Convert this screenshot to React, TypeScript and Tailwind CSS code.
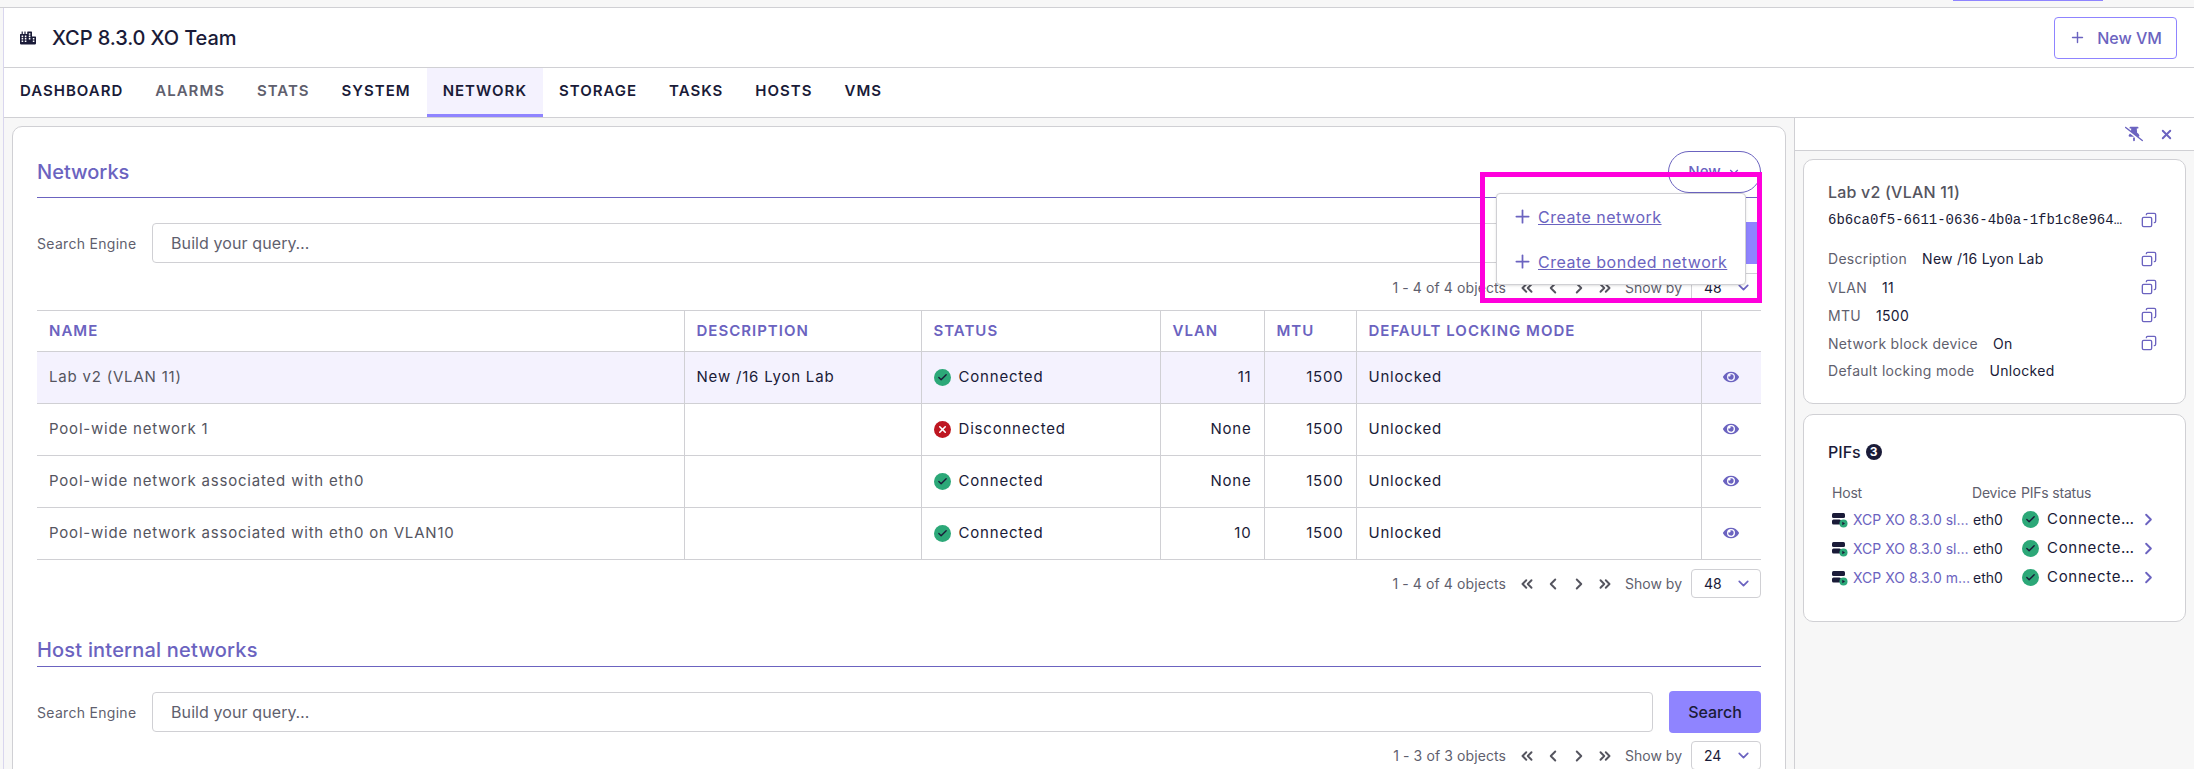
import { Check, ChevronDown, ChevronLeft, ChevronRight, ChevronsLeft, ChevronsRight, Copy, Plus, X } from "lucide-react";
import { FaCity, FaEye } from "react-icons/fa";
import { FaThumbtackSlash } from "react-icons/fa6";

const tabs = [
  { label: "Dashboard" },
  { label: "Alarms", muted: true },
  { label: "Stats", muted: true },
  { label: "System" },
  { label: "Network", active: true },
  { label: "Storage" },
  { label: "Tasks" },
  { label: "Hosts" },
  { label: "VMs" },
];

const networks = [
  { name: "Lab v2 (VLAN 11)", description: "New /16 Lyon Lab", connected: true, vlan: "11", selected: true },
  { name: "Pool-wide network 1", description: "", connected: false, vlan: "None" },
  { name: "Pool-wide network associated with eth0", description: "", connected: true, vlan: "None" },
  { name: "Pool-wide network associated with eth0 on VLAN10", description: "", connected: true, vlan: "10" },
];

const details = [
  { label: "Description", value: "New /16 Lyon Lab", copy: true, row: "h-[29px]" },
  { label: "VLAN", value: "11", copy: true, row: "h-[28px]" },
  { label: "MTU", value: "1500", copy: true, row: "h-[28px]" },
  { label: "Network block device", value: "On", copy: true, row: "h-[28px]" },
  { label: "Default locking mode", value: "Unlocked", copy: false, row: "h-[26px]" },
];

const pifs = ["XCP XO 8.3.0 sl…", "XCP XO 8.3.0 sl…", "XCP XO 8.3.0 m…"];

function StatusDot({ ok = true }: { ok?: boolean }) {
  return (
    <span className={`flex h-[17px] w-[17px] shrink-0 items-center justify-center rounded-full ${ok ? "bg-[#2ca878]" : "bg-[#be1621]"}`}>
      {ok ? (
        <Check className="h-[11px] w-[11px] text-[#1a1b38]" strokeWidth={3} />
      ) : (
        <X className="h-[11px] w-[11px] text-white" strokeWidth={3.5} />
      )}
    </span>
  );
}

function HostIcon() {
  return (
    <svg viewBox="0 0 16 16" className="mr-[5px] h-[16px] w-[16px] shrink-0">
      <rect x="0" y="1" width="13" height="5" rx="1.5" fill="#1a1b38" />
      <rect x="0" y="7.5" width="9" height="5" rx="1.5" fill="#1a1b38" />
      <circle cx="11.5" cy="11.5" r="4" fill="#2ca878" />
      <path d="M10.3 9.8 L13 11.5 L10.3 13.2 Z" fill="#1a1b38" />
    </svg>
  );
}

function Pagination({ range, show }: { range: string; show: string }) {
  return (
    <div className="flex items-center justify-end text-[14px] text-[#5f5f6e]">
      <span className="tracking-[0.1px]">{range}</span>
      <div className="ml-[12px] flex items-center gap-[8px] text-[#55555f]">
        <ChevronsLeft className="h-[18px] w-[18px]" strokeWidth={2.6} />
        <ChevronLeft className="h-[18px] w-[18px]" strokeWidth={2.6} />
        <ChevronRight className="h-[18px] w-[18px]" strokeWidth={2.6} />
        <ChevronsRight className="h-[18px] w-[18px]" strokeWidth={2.6} />
      </div>
      <span className="ml-[11px]">Show by</span>
      <div className="ml-[9px] flex h-[29px] w-[70px] items-center justify-between rounded-[4px] border border-[#d0d0d4] pr-[8px] pl-[12px] text-[#1a1b38]">
        {show}
        <ChevronDown className="h-[17px] w-[17px] text-[#6b63c0]" strokeWidth={2.4} />
      </div>
    </div>
  );
}

function SearchRow() {
  return (
    <div className="flex items-center">
      <span className="w-[115px] shrink-0 text-[14px] tracking-[0.3px] text-[#5f5f6e]">Search Engine</span>
      <div className="flex h-[40px] flex-1 items-center rounded-[4px] border border-[#d0d0d4] pl-[18px] text-[16px] tracking-[0.1px] text-[#5f5f6e]">
        Build your query…
      </div>
      <button className="ml-[16px] h-[42px] w-[92px] rounded-[4px] bg-[#8f84ff] text-[16px] font-medium text-[#1a1b38]">
        Search
      </button>
    </div>
  );
}

function NetworksTable() {
  return (
    <table className="w-full table-fixed border-collapse text-[15px] tracking-[0.8px] text-[#55555f]">
      <thead>
        <tr className="h-[41px] border-y border-[#d0d0d4] text-left text-[15px] font-semibold tracking-[1px] text-[#6b63c0]">
          <th className="w-[647px] px-3 font-semibold">NAME</th>
          <th className="w-[237px] border-l border-[#d0d0d4] px-3 font-semibold">DESCRIPTION</th>
          <th className="w-[239px] border-l border-[#d0d0d4] px-3 font-semibold">STATUS</th>
          <th className="w-[104px] border-l border-[#d0d0d4] px-3 font-semibold">VLAN</th>
          <th className="w-[92px] border-l border-[#d0d0d4] px-3 font-semibold">MTU</th>
          <th className="w-[345px] border-l border-[#d0d0d4] px-3 font-semibold">DEFAULT LOCKING MODE</th>
          <th className="border-l border-[#d0d0d4]"></th>
        </tr>
      </thead>
      <tbody>
        {networks.map((n) => (
          <tr key={n.name} className={`h-[52px] border-b border-[#d0d0d4] ${n.selected ? "bg-[#f4f2fe]" : ""}`}>
            <td className="px-3 whitespace-nowrap">{n.name}</td>
            <td className="border-l border-[#d0d0d4] px-3 text-[#1a1b38]">{n.description}</td>
            <td className="border-l border-[#d0d0d4] px-3 text-[#1a1b38]">
              <div className="flex items-center gap-[8px]">
                <StatusDot ok={n.connected} />
                {n.connected ? "Connected" : "Disconnected"}
              </div>
            </td>
            <td className="border-l border-[#d0d0d4] px-3 text-right text-[#1a1b38]">{n.vlan}</td>
            <td className="border-l border-[#d0d0d4] px-3 text-right text-[#1a1b38]">1500</td>
            <td className="border-l border-[#d0d0d4] px-3 text-[#1a1b38]">Unlocked</td>
            <td className="border-l border-[#d0d0d4] text-center">
              <FaEye className="mx-auto h-[16px] w-[16px] -translate-y-px text-[#6b63c0]" />
            </td>
          </tr>
        ))}
      </tbody>
    </table>
  );
}

function DetailCard() {
  return (
    <div className="rounded-[10px] border border-[#d0d0d4] bg-white pt-[22px] pr-[28px] pb-[20px] pl-[24px]">
      <h3 className="text-[16px] leading-[20px] font-medium tracking-[0.2px] text-[#55555f]">Lab v2 (VLAN 11)</h3>
      <div className="mt-[8px] flex h-[20px] items-center justify-between text-[14px] text-[#1a1b38]" style={{ fontFamily: '"Liberation Mono", monospace' }}>
        <span>6b6ca0f5-6611-0636-4b0a-1fb1c8e964…</span>
        <Copy className="h-[16px] w-[16px] -scale-x-100 text-[#6b63c0]" />
      </div>
      <div className="mt-[14px] text-[14px] tracking-[0.3px]">
        {details.map((d) => (
          <div key={d.label} className={`flex items-center ${d.row}`}>
            <span className="text-[#5f5f6e]">{d.label}</span>
            <span className="ml-[15px] text-[#1a1b38]">{d.value}</span>
            {d.copy && <Copy className="ml-auto h-[16px] w-[16px] -scale-x-100 text-[#6b63c0]" />}
          </div>
        ))}
      </div>
    </div>
  );
}

function PifsCard() {
  return (
    <div className="mt-[10px] rounded-[10px] border border-[#d0d0d4] bg-white pt-[27px] pr-[26px] pb-[29px] pl-[24px]">
      <div className="flex h-[20px] items-center gap-[5px] text-[16px] font-medium text-[#1a1b38]">
        PIFs
        <span className="flex h-4 w-4 items-center justify-center rounded-full bg-[#1a1b38] text-[12px] font-bold text-white">3</span>
      </div>
      <div className="mt-[18px] pl-[4px]">
        <div className="flex h-[25px] items-center text-[14px] tracking-[-0.2px] text-[#5f5f6e]">
          <span className="w-[140px]">Host</span>
          <span className="w-[49px]">Device</span>
          <span>PIFs status</span>
        </div>
        {pifs.map((host, i) => (
          <div key={i} className="flex h-[29px] items-center text-[14px]">
            <div className="flex w-[141px] shrink-0 items-center">
              <HostIcon />
              <span className="whitespace-nowrap text-[#6b63c0]">{host}</span>
            </div>
            <span className="w-[49px] shrink-0 text-[#1a1b38]">eth0</span>
            <StatusDot />
            <span className="ml-[8px] w-[92px] shrink-0 text-[15px] tracking-[0.7px] whitespace-nowrap text-[#1a1b38]">Connecte…</span>
            <ChevronRight className="h-[19px] w-[19px] shrink-0 text-[#6b63c0]" strokeWidth={2.4} />
          </div>
        ))}
      </div>
    </div>
  );
}

export default function App() {
  return (
    <div className="relative flex h-[769px] flex-col overflow-hidden bg-[#f7f7f7] text-[#1a1b38]" style={{ fontFamily: "Inter, sans-serif" }}>
      <div className="h-[8px] shrink-0 border-b border-[#d0d0d4] bg-[#f7f7f7]">
        <div className="ml-[1953px] h-px w-[150px] bg-[#8f84ff]" />
      </div>

      <div className="flex min-h-0 flex-1">
        <div className="w-[4px] shrink-0 border-r border-[#d9d6ee] bg-[#f7f7f7]" />

        <div className="flex min-w-0 flex-1 flex-col">
          <header className="flex h-[60px] shrink-0 items-center justify-between border-b border-[#d0d0d4] bg-white pr-[17px] pl-[16px]">
            <div className="flex items-center gap-[16px]">
              <FaCity className="h-[16px] w-[16px] text-[#1a1b38]" />
              <h1 className="text-[20px] font-medium tracking-[-0.1px]">XCP 8.3.0 XO Team</h1>
            </div>
            <button className="flex h-[42px] w-[123px] items-center justify-center gap-[11px] rounded-[4px] border border-[#8f84ff] text-[16px] font-medium text-[#6b63c0]">
              <Plus className="h-[17px] w-[17px]" />
              New VM
            </button>
          </header>

          <nav className="flex h-[50px] shrink-0 border-b border-[#d0d0d4] bg-white">
            {tabs.map((t) => (
              <div
                key={t.label}
                className={`flex items-center border-b-[3px] px-4 text-[15px] font-semibold tracking-[1px] uppercase ${
                  t.active ? "border-[#8f84ff] bg-[#f4f2fe]" : "border-transparent"
                } ${t.muted ? "text-[#5f5f6e]" : "text-[#1a1b38]"}`}
              >
                {t.label}
              </div>
            ))}
          </nav>

          <div className="flex min-h-0 flex-1">
            <main className="min-w-0 flex-1 pt-[8px] pr-[8px] pl-[8px]">
              <div className="relative h-[800px] rounded-t-[10px] border border-[#d0d0d4] bg-white px-[24px] pt-[24px]">
                <section>
                  <div className="flex h-[47px] items-end justify-between border-b border-[#6b63c0]">
                    <h2 className="mb-[10px] text-[20px] font-medium text-[#6b63c0]">Networks</h2>
                    <button className="mb-[4px] flex h-[42px] w-[93px] items-center justify-center gap-[6px] rounded-[21px] border border-[#6b63c0] bg-white text-[15px] font-medium text-[#6b63c0]">
                      New
                      <ChevronDown className="h-[14px] w-[14px]" />
                    </button>
                  </div>
                  <div className="mt-[24px]">
                    <SearchRow />
                  </div>
                  <div className="mt-[9px]">
                    <Pagination range="1 - 4 of 4 objects" show="48" />
                  </div>
                  <div className="mt-[8px]">
                    <NetworksTable />
                  </div>
                  <div className="mt-[9px]">
                    <Pagination range="1 - 4 of 4 objects" show="48" />
                  </div>
                </section>

                <section className="mt-[41px]">
                  <div className="flex h-[28px] items-start border-b border-[#6b63c0]">
                    <h2 className="text-[20px] leading-[22px] font-medium tracking-[0.2px] text-[#6b63c0]">Host internal networks</h2>
                  </div>
                  <div className="mt-[24px]">
                    <SearchRow />
                  </div>
                  <div className="mt-[8px]">
                    <Pagination range="1 - 3 of 3 objects" show="24" />
                  </div>
                </section>

                {/* open New menu */}
                <div className="absolute top-[66px] right-[39px] z-10 w-[250px] rounded-[4px] border border-[#d0d0d4] bg-white pl-[15px] shadow-sm">
                  <div className="flex h-[45px] items-center gap-[5px] text-[16px] tracking-[0.5px] text-[#6b63c0]">
                    <Plus className="h-[21px] w-[21px]" />
                    <a className="underline">Create network</a>
                  </div>
                  <div className="flex h-[45px] items-center gap-[5px] text-[16px] tracking-[0.5px] text-[#6b63c0]">
                    <Plus className="h-[21px] w-[21px]" />
                    <a className="underline">Create bonded network</a>
                  </div>
                </div>
              </div>
            </main>

            <aside className="flex w-[400px] shrink-0 flex-col border-l border-[#d0d0d4]">
              <div className="flex h-[33px] shrink-0 items-center justify-end gap-[16px] border-b border-[#d0d0d4] bg-white pr-[20px]">
                <FaThumbtackSlash className="h-[16px] w-[18px] text-[#6b63c0]" />
                <X className="h-[15px] w-[15px] text-[#6b63c0]" strokeWidth={3} />
              </div>
              <div className="pt-[8px] pr-[8px] pl-[8px]">
                <DetailCard />
                <PifsCard />
              </div>
            </aside>
          </div>
        </div>
      </div>

      {/* annotation drawn on the screenshot */}
      <div className="pointer-events-none absolute top-[172px] left-[1480px] z-20 h-[131px] w-[282px] border-[5px] border-[#ff00dc]" />
    </div>
  );
}
